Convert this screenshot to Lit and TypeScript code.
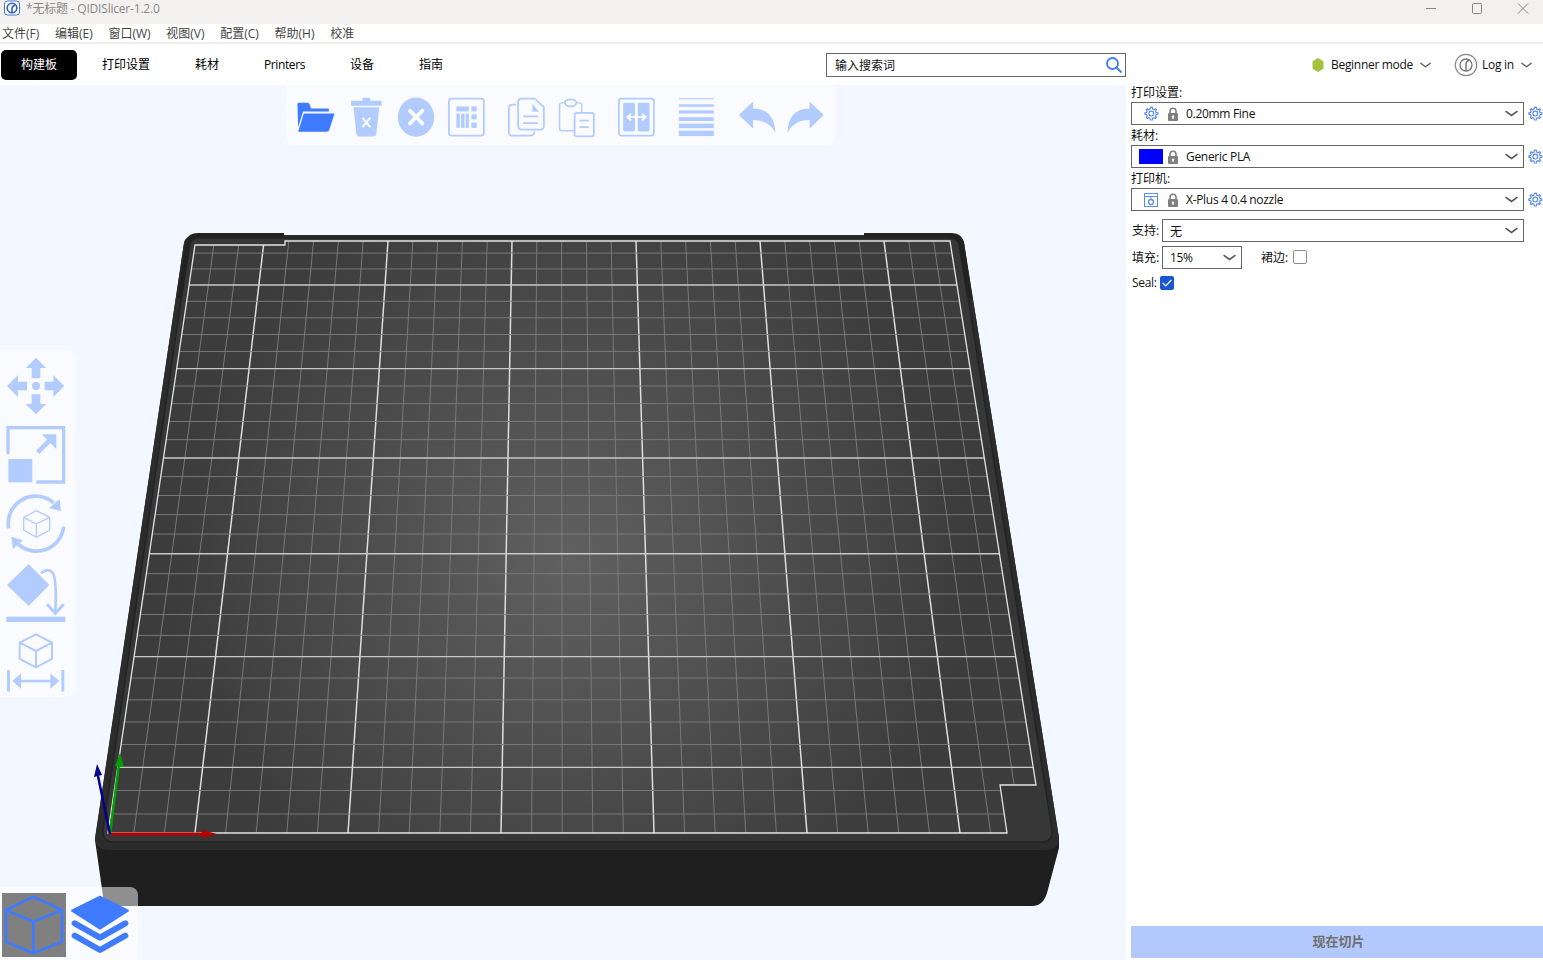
import { LitElement, html, css, svg } from "lit";
import { customElement } from "lit/decorators.js";

const L = "#b3ccff";
const B = "#3f7bff";
const PANEL = "#f9fbff";

const topIcons: [number, any][] = [
  [100, svg`<path d="M48 54 Q48 50 52 50 H76 Q80 50 82 54 L86 66 H136 V74 H64 L50 118 Z" fill="${B}"/><path d="M66 80 H152 L137 126 Q135 131 130 131 H50 Z" fill="${B}"/>`],
  [240, svg`<rect x="198" y="44" width="86" height="14" rx="2" fill="${L}"/><rect x="230" y="36" width="22" height="10" rx="2" fill="${L}"/><path d="M205 62 H277 L269 137 Q268 144 261 144 H221 Q214 144 213 137 Z" fill="${L}"/><path d="M230 92 L252 118 M252 92 L230 118" stroke="#fff" stroke-width="6" fill="none"/>`],
  [380, svg`<ellipse cx="380" cy="90" rx="51" ry="55" fill="${L}"/><path d="M363 72 L398 108 M398 72 L363 108" stroke="#fff" stroke-width="10" stroke-linecap="round" fill="none"/>`],
  [520, svg`<rect x="472" y="38" width="98" height="104" rx="8" fill="none" stroke="${L}" stroke-width="5"/><g fill="${L}"><rect x="493" y="60" width="35" height="14"/><rect x="535" y="60" width="15" height="14"/><rect x="493" y="80" width="10" height="40"/><rect x="506" y="80" width="10" height="40"/><rect x="519" y="80" width="9" height="40"/><rect x="535" y="82" width="15" height="14"/><rect x="535" y="105" width="15" height="15"/></g>`],
  [688, svg`<path d="M660 55 H650 Q640 55 640 65 V132 Q640 142 650 142 H700 Q710 142 712 130" fill="none" stroke="${L}" stroke-width="5"/><path d="M676 38 H712 L738 62 V115 Q738 125 728 125 H676 Q666 125 666 115 V48 Q666 38 676 38 Z" fill="${PANEL}" stroke="${L}" stroke-width="5"/><path d="M706 52 L724 75 H706 Z" fill="${L}"/><path d="M680 88 H722 M680 107 H722" stroke="${L}" stroke-width="5"/>`],
  [828, svg`<rect x="782" y="50" width="62" height="78" rx="6" fill="none" stroke="${L}" stroke-width="4"/><ellipse cx="813" cy="50" rx="16" ry="10" fill="${PANEL}" stroke="${L}" stroke-width="5"/><rect x="824" y="78" width="54" height="66" rx="6" fill="${PANEL}" stroke="${L}" stroke-width="5"/><path d="M838 100 H864 M838 118 H864" stroke="${L}" stroke-width="5"/>`],
  [996, svg`<rect x="948" y="38" width="98" height="104" rx="8" fill="none" stroke="${L}" stroke-width="5"/><rect x="960" y="50" width="33" height="80" rx="4" fill="${L}"/><rect x="1001" y="50" width="33" height="80" rx="4" fill="${L}"/><path d="M975 90 H1020 M982 81 L972 90 L982 99 M1013 81 L1023 90 L1013 99" stroke="#fff" stroke-width="5" fill="none"/>`],
  [1164, svg`<g fill="${L}"><rect x="1116" y="37" width="98" height="3"/><rect x="1116" y="54" width="98" height="7"/><rect x="1116" y="71" width="98" height="9"/><rect x="1116" y="90" width="98" height="11"/><rect x="1116" y="108" width="98" height="13"/><rect x="1116" y="128" width="98" height="15"/></g>`],
  [1330, svg`<path d="M1322 46 L1282 84 L1322 122 V98 Q1365 98 1384 134 Q1382 66 1322 66 Z" fill="${L}"/>`],
  [1474, svg`<path d="M1484 46 L1524 84 L1484 122 V98 Q1441 98 1422 134 Q1424 66 1484 66 Z" fill="${L}"/>`],
];
const GROUP_START = new Set([4, 6, 7, 8]);

const sideIcons: any[] = [
  svg`<circle cx="107" cy="123" r="12" fill="${L}"/><g fill="${L}"><path d="M107 38 L138 69 H120 V100 H94 V69 H76 Z"/><path d="M107 208 L138 177 H120 V148 H94 V177 H76 Z"/><path d="M20 123 L53 90 V110 H80 V136 H53 V156 Z"/><path d="M192 123 L159 90 V110 H133 V136 H159 V156 Z"/></g>`,
  svg`<path d="M23 328 V248 H190 V411 H108" fill="none" stroke="${L}" stroke-width="10"/><rect x="24" y="342" width="72" height="70" fill="${L}"/><path d="M112 322 L156 278" stroke="${L}" stroke-width="14" fill="none"/><path d="M124 268 H168 V312 Z" fill="${L}"/>`,
  svg`<path d="M25 550 A82 82 0 0 1 160 474" fill="none" stroke="${L}" stroke-width="11"/><path d="M178 462 L182 498 L146 490 Z" fill="${L}"/><path d="M190 545 A82 82 0 0 1 52 596" fill="none" stroke="${L}" stroke-width="11"/><path d="M33 575 L68 586 L38 612 Z" fill="${L}"/><path d="M108 497 L148 517 V555 L108 577 L70 555 V517 Z M70 517 L108 537 L148 517 M108 537 V577" fill="none" stroke="${L}" stroke-width="4"/>`,
  svg`<path d="M85 657 L147 720 L85 783 L20 720 Z" fill="${L}"/><path d="M122 685 Q142 668 156 682 Q170 700 165 800" fill="none" stroke="${L}" stroke-width="8"/><path d="M140 778 L165 805 L190 778" fill="none" stroke="${L}" stroke-width="9"/><rect x="18" y="815" width="177" height="16" fill="${L}"/>`,
  svg`<path d="M107 868 L155 893 V942 L107 967 L58 942 V893 Z M58 893 L107 918 L155 893 M107 918 V967" fill="none" stroke="${L}" stroke-width="6"/><rect x="20" y="975" width="9" height="65" rx="3" fill="${L}"/><rect x="183" y="975" width="9" height="65" rx="3" fill="${L}"/><path d="M50 1008 H165" stroke="${L}" stroke-width="8"/><path d="M36 1008 L62 985 V1031 Z M177 1008 L150 985 V1031 Z" fill="${L}"/>`,
];

function gridLines() {
  const out: any[] = [];
  // vertical family: straight lines between front edge and back edge
  for (let k = -3; k <= 28; k++) {
    const x0 = 195 + 30.6 * k;
    const x1 = 264 + 24.8 * k;
    const major = k % 5 === 0 && k >= 0 && k <= 25;
    out.push(svg`<line x1="${x0}" y1="833" x2="${x1}" y2="241" class=${major ? "mj" : "mn"}></line>`);
  }
  // horizontal family: inverse plate width is linear in depth
  for (let k = -2; k <= 27; k++) {
    const w = 1e4 / (10.93 + 0.084 * k);
    const y = 241 + ((w - 754) * 592) / 181;
    const major = k % 5 === 0 && k >= 0 && k <= 25;
    out.push(svg`<line x1="60" y1="${y}" x2="1080" y2="${y}" class=${major ? "mjh" : "mn"}></line>`);
  }
  return out;
}

const GRID = "195,245 285,245 285,241 950,241 1036,785 1000,785 1007,833 108,833";

function gear() {
  return html`<svg class="gear" viewBox="0 0 16 16"><path d="M8 1.2 L9.3 1.4 L9.7 3.1 L11 3.7 L12.5 2.8 L13.4 3.7 L12.5 5.2 L13 6.4 L14.8 6.9 V8.2 L13 8.7 L12.5 10 L13.4 11.5 L12.5 12.4 L11 11.6 L9.7 12.1 L9.3 14 H7.4 L7 12.1 L5.7 11.6 L4.2 12.4 L3.3 11.5 L4.2 10 L3.6 8.7 L1.9 8.2 V6.9 L3.6 6.4 L4.2 5.2 L3.3 3.7 L4.2 2.8 L5.7 3.7 L7 3.1 L7.4 1.4 Z" fill="none" stroke="#5b8def" stroke-width="1.2"/><circle cx="8.3" cy="7.6" r="2.4" fill="none" stroke="#5b8def" stroke-width="1.2"/></svg>`;
}
function lock() {
  return html`<svg class="lock" viewBox="0 0 12 14"><path d="M3 6.5 V4.3 A3 3 0 0 1 9 4.3 V6.5" fill="none" stroke="#808080" stroke-width="1.6"/><rect x="1" y="6" width="10" height="8" rx="1" fill="#808080"/><circle cx="6" cy="9.6" r="1.2" fill="#fff"/><rect x="5.4" y="9.6" width="1.2" height="2.4" fill="#fff"/></svg>`;
}
function chev(cls = "chev") {
  return html`<svg class="${cls}" viewBox="0 0 12 6"><path d="M0.5 0.8 L6 4.8 L11.5 0.8" fill="none" stroke="#555" stroke-width="1.4"/></svg>`;
}

@customElement("app-root")
export class AppRoot extends LitElement {
  static styles = css`
    :host { display: block; width: 1543px; height: 960px; overflow: hidden; background: #fff;
      font-family: "Open Sans", "Noto Sans CJK SC", sans-serif; font-size: 12px; color: #111; }
    .title { height: 24px; background: #f2f1ef; display: flex; align-items: center; color: #8a8a8a; }
    .appicon { width: 18px; height: 18px; margin: 0 5px 0 3px; flex: none; align-self: flex-start; }
    .title span { letter-spacing: -0.2px; margin-top: -8px; }
    .winbtns { margin-left: auto; margin-right: -3px; display: flex; }
    .winbtns svg { width: 46px; height: 16px; display: block; margin-top: -8px; }
    .menu { height: 18px; display: flex; gap: 15.7px; padding-left: 2px; align-items: center; color: #444; border-bottom: 2px solid #f0f0f0; white-space: nowrap; }
    .tabs { height: 41px; display: flex; align-items: center; white-space: nowrap; }
    .tablist { width: 826px; padding-left: 1px; box-sizing: border-box; display: flex; gap: 5px; flex: none; }
    .tab { padding: 0 20px; height: 30px; line-height: 30px; color: #000; border-radius: 5px; }
    .tab.on { background: #000; color: #fff; width: 36px; text-align: center; }
    .tab.lat { letter-spacing: -0.4px; }
    .search { box-sizing: border-box; flex: none; width: 300px; height: 24px; border: 1px solid #666; display: flex; align-items: center; padding: 0 2px 0 8px; justify-content: space-between; }
    .search svg { width: 18px; height: 18px; }
    .mode { padding-left: 186px; display: flex; align-items: center; }
    .mode span { letter-spacing: -0.3px; }
    .hex { width: 12px; height: 14px; margin-right: 7px; flex: none; }
    .mode .chev { width: 11px; height: 6px; margin-left: 7px; }
    .loginic { width: 24px; height: 24px; margin: 0 4px 0 23px; flex: none; }
    .main { display: flex; height: 875px; }
    .canvas { position: relative; width: 1126px; height: 875px; background: #f3f7ff; flex: none; overflow: hidden; }
    .scene { position: absolute; left: 0; top: 0; width: 1126px; height: 875px; }
    .mn { stroke: #7e7e7e; stroke-width: 0.9; }
    .mj { stroke: #dedede; stroke-width: 1.5; }
    .mjh { stroke: #c8c8c8; stroke-width: 1.3; }
    .toptb { position: absolute; left: 286px; top: 0; width: 550px; height: 60px; box-sizing: border-box; padding: 10px 0 0 10px; display: flex; gap: 10px; background: #f9fbff; border-radius: 0 0 8px 8px; }
    .toptb svg { width: 40px; height: 40px; overflow: visible; flex: none; }
    .toptb .grp { margin-left: 10px; }
    .lefttb { position: absolute; left: 0; top: 265px; width: 75px; box-sizing: border-box; padding: 6px 0 1px 6px; display: flex; flex-direction: column; gap: 10px; background: #f9fbff; border-radius: 0 8px 8px 0; }
    .lefttb svg { width: 60px; height: 60px; overflow: visible; display: block; }
    .views { position: absolute; left: 0; bottom: 0; width: 138px; height: 73px; background: rgba(255,255,255,0.5); border-radius: 0 8px 0 0; display: flex; padding: 6px 0 0 2px; box-sizing: border-box; gap: 2px; }
    .views .white { position: absolute; left: 0; top: 19px; right: 0; bottom: 0; background: #f9fbff; z-index: 0; }
    .tile { width: 64px; height: 64px; position: relative; z-index: 1; flex: none; }
    .tile.sel { background: #808080; }
    .tile svg { width: 64px; height: 64px; overflow: visible; display: block; }
    .side { flex: 1; display: flex; flex-direction: column; padding: 0 0 2px 5px; box-sizing: border-box; }
    .lbl { line-height: 14px; padding: 4px 0 2px; }
    .lbl.first { padding: 1px 0 2px; }
    .row { display: flex; align-items: center; }
    .combo { box-sizing: border-box; height: 23px; border: 1px solid #666; display: flex; align-items: center; width: 393px; background: #fff; padding-right: 5px; flex: none; }
    .combo .txt { flex: 1; letter-spacing: -0.3px; }
    .chev { width: 13px; height: 7px; flex: none; }
    .gear { width: 16px; height: 16px; margin-left: 3px; flex: none; }
    .lead { width: 35px; display: flex; justify-content: center; padding-left: 3px; box-sizing: border-box; flex: none; }
    .lead .gear { margin: 0; }
    .swatch { width: 24px; height: 15px; background: #0000ff; flex: none; margin: 0 0 0 7px; }
    .lock { width: 12px; height: 14px; margin: 0 7px 0 0; flex: none; }
    .swatch + .lock { margin-left: 4px; }
    .lead .printer { width: 14px; height: 14px; }
    .r1 { margin-top: 8px; }
    .r2 { margin-top: 4px; }
    .r3 { margin-top: 6px; }
    .flbl { width: 31px; padding-left: 1px; box-sizing: border-box; flex: none; margin-top: -1px; }
    .r1 .combo { width: 362px; padding-left: 7px; }
    .r2 .combo { width: 80px; padding-left: 7px; }
    .skirt { margin-left: 19px; margin-top: -1px; }
    .cb { width: 14px; height: 14px; box-sizing: border-box; border: 1px solid #8a8a8a; border-radius: 2px; margin: -2px 0 0 5px; background: #fff; flex: none; }
    .cb.on { background: #1a56d0; border: 0; display: flex; align-items: center; justify-content: center; margin: 0; }
    .cb.on svg { width: 10px; height: 8px; }
    .seal { width: 29px; padding-left: 1px; box-sizing: border-box; flex: none; letter-spacing: -0.3px; margin-top: -1px; }
    .slice { margin-top: auto; height: 32px; box-sizing: border-box; background: #b3c9fd; color: #6e6e6e; font-weight: 700; font-size: 13px; display: flex; align-items: center; justify-content: center; padding: 0 0 3px 3px; }
  `;

  render() {
    return html`
      <div class="title">
        <svg class="appicon" viewBox="0 0 18 18"><rect x="1.5" y="1" width="15" height="14" rx="3" fill="#fff" stroke="#4a74c9"/><circle cx="9" cy="8" r="4.8" fill="none" stroke="#2f5fbf" stroke-width="1.6"/><path d="M9 12.5 V8.5 Q9 6 12 5.3" fill="none" stroke="#2f5fbf" stroke-width="1.6"/></svg>
        <span>*无标题 - QIDISlicer-1.2.0</span>
        <div class="winbtns">
          <svg viewBox="0 0 46 16"><path d="M18 8.5 H28" stroke="#888" fill="none"/></svg>
          <svg viewBox="0 0 46 16"><rect x="18.5" y="3.5" width="9" height="10" rx="1" stroke="#888" fill="none"/></svg>
          <svg viewBox="0 0 46 16"><path d="M18 3.5 L28 13.5 M28 3.5 L18 13.5" stroke="#888" fill="none"/></svg>
        </div>
      </div>
      <div class="menu">
        <span>文件(F)</span><span>编辑(E)</span><span>窗口(W)</span><span>视图(V)</span><span>配置(C)</span><span>帮助(H)</span><span>校准</span>
      </div>
      <div class="tabs">
        <div class="tablist">
          <div class="tab on">构建板</div>
          <div class="tab">打印设置</div>
          <div class="tab">耗材</div>
          <div class="tab lat">Printers</div>
          <div class="tab">设备</div>
          <div class="tab">指南</div>
        </div>
        <div class="search">
          <span>输入搜索词</span>
          <svg viewBox="0 0 18 18"><circle cx="7.5" cy="7.5" r="5.5" fill="none" stroke="#3f7bff" stroke-width="1.8"/><path d="M11.5 11.5 L16.5 16.5" stroke="#3f7bff" stroke-width="2"/></svg>
        </div>
        <div class="mode">
          <svg class="hex" viewBox="0 0 12 14"><path d="M6 0 L11.5 3.2 V10.8 L6 14 L0.5 10.8 V3.2 Z" fill="#a4c23c"/></svg>
          <span>Beginner mode</span>${chev()}
          <svg class="loginic" viewBox="0 0 24 24"><circle cx="12" cy="12" r="10.7" fill="none" stroke="#888" stroke-width="1.2"/><circle cx="12" cy="12" r="6" fill="none" stroke="#777" stroke-width="1.3"/><path d="M12 18 V11 Q12 8 16 7" fill="none" stroke="#777" stroke-width="1.5"/></svg>
          <span>Log in</span>${chev()}
        </div>
      </div>
      <div class="main">
        <div class="canvas">
          <svg class="scene" viewBox="0 85 1126 875">
            <defs>
              <radialGradient id="glow" gradientUnits="userSpaceOnUse" cx="570" cy="560" r="400">
                <stop offset="0" stop-color="#606060"/><stop offset="1" stop-color="#3c3c3c"/>
              </radialGradient>
              <clipPath id="gridclip"><polygon points="${GRID}"/></clipPath>
            </defs>
            <path d="M197 235 H952 Q962 235 964 243 L1059 838 V848 L1047 893 Q1043 906 1032 906 H112 Q105 906 103 896 L95 840 L184 243 Q186 235 197 235 Z" fill="#1f1f1f"/>
            <path d="M197 235 H952 Q962 235 964 243 L1059 838 Q1059 850 1045 850 H110 Q95 850 95 838 L184 243 Q186 235 197 235 Z" fill="#2c2c2c"/>
            <path d="M198 238 H949 Q958 238 960 246 L1052 830 Q1053 842 1041 842 H114 Q102 842 103 830 L189 246 Q191 238 198 238 Z" fill="#373737" stroke="#232323" stroke-width="1.4"/>
            <path d="M186 241 Q188 233 198 233 H284 V237 H200 Q193 237 191 243 L182 298 H177 Z M864 233 H952 Q962 233 964 243 L972 298 H967 L958 243 Q956 237 949 237 H864 Z" fill="#222"/>
            <polygon points="${GRID}" fill="url(#glow)"/>
            <g clip-path="url(#gridclip)">${gridLines()}</g>
            <polygon points="${GRID}" fill="none" stroke="#e4e4e4" stroke-width="1.3"/>
            <path d="M110 834 H207" stroke="#b80000" stroke-width="3"/><path d="M202 830 L217 834 L202 838 Z" fill="#b80000"/>
            <path d="M110 834 L119 764" stroke="#00a000" stroke-width="2.5"/><path d="M120 753 L124 767 L115 766 Z" fill="#00a000"/>
            <path d="M110 834 L98 776" stroke="#00008c" stroke-width="2.5"/><path d="M97 764 L102 775 L94 777 Z" fill="#00008c"/>
          </svg>
          <div class="toptb">
            ${topIcons.map(([cx, g], i) => html`<svg class=${GROUP_START.has(i) ? "grp" : ""} viewBox="${cx - 56} 28 112 112">${g}</svg>`)}
          </div>
          <div class="lefttb">
            ${sideIcons.map((g, i) => html`<svg viewBox="17 ${33 + 210 * i} 180 180">${g}</svg>`)}
          </div>
          <div class="views">
            <div class="white"></div>
            <div class="tile sel">
              <svg viewBox="6 459 192 192"><path d="M100 470 L186 510 V605 L100 640 L18 605 V510 Z M18 510 L100 545 L186 510 M100 545 V640" fill="none" stroke="${B}" stroke-width="8" stroke-linejoin="round"/></svg>
            </div>
            <div class="tile">
              <svg viewBox="204 459 192 192"><path d="M300 470 L384 512 L300 566 L216 512 Z" fill="${B}" stroke="${B}" stroke-width="6" stroke-linejoin="round"/><path d="M224 550 L300 593 L376 550 M224 587 L300 630 L376 587" fill="none" stroke="${B}" stroke-width="18" stroke-linejoin="round" stroke-linecap="round"/></svg>
            </div>
          </div>
        </div>
        <div class="side">
          <div class="lbl first">打印设置:</div>
          <div class="row"><div class="combo"><div class="lead">${gear()}</div>${lock()}<span class="txt">0.20mm Fine</span>${chev()}</div>${gear()}</div>
          <div class="lbl">耗材:</div>
          <div class="row"><div class="combo"><div class="swatch"></div>${lock()}<span class="txt">Generic PLA</span>${chev()}</div>${gear()}</div>
          <div class="lbl">打印机:</div>
          <div class="row"><div class="combo"><div class="lead"><svg class="printer" viewBox="0 0 14 14"><rect x="0.5" y="0.5" width="13" height="13" fill="none" stroke="#5b8def"/><path d="M0.5 3.5 H13.5 M7 3.5 V6" stroke="#5b8def" fill="none"/><circle cx="7" cy="9" r="2.5" fill="none" stroke="#5b8def" stroke-width="1.3"/></svg></div>${lock()}<span class="txt">X-Plus 4 0.4 nozzle</span>${chev()}</div>${gear()}</div>
          <div class="row r1"><span class="flbl">支持:</span><div class="combo"><span class="txt">无</span>${chev()}</div></div>
          <div class="row r2"><span class="flbl">填充:</span><div class="combo"><span class="txt">15%</span>${chev()}</div><span class="skirt">裙边:</span><div class="cb"></div></div>
          <div class="row r3"><span class="seal">Seal:</span><div class="cb on"><svg viewBox="0 0 10 8"><path d="M0.7 3.8 L3.8 7 L9.3 1" fill="none" stroke="#fff" stroke-width="1.2"/></svg></div></div>
          <div class="slice">现在切片</div>
        </div>
      </div>
    `;
  }
}
